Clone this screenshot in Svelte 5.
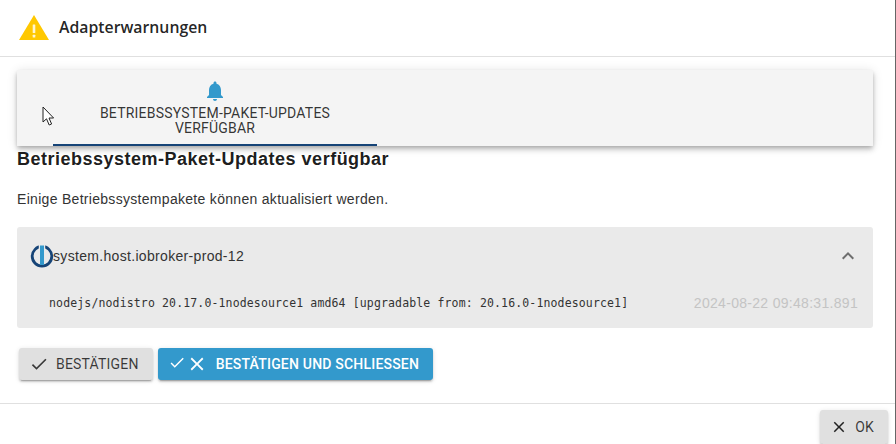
<script>
  const logLine = 'nodejs/nodistro 20.17.0-1nodesource1 amd64 [upgradable from: 20.16.0-1nodesource1]';
</script>

<div class="dialog">
  <header class="title">
    <svg class="warn" viewBox="0 0 30 25" width="30" height="25" aria-hidden="true">
      <path d="M15 0 L30 25 H0 Z" fill="#ffc800"/>
      <rect x="13.7" y="9.5" width="2.6" height="8.5" rx="0.5" fill="#fff5d0"/>
      <rect x="13.7" y="19.8" width="2.6" height="2.6" rx="0.5" fill="#fff5d0"/>
    </svg>
    <h2>Adapterwarnungen</h2>
  </header>

  <main class="content">
    <nav class="tabs">
      <div class="tab">
        <svg viewBox="0 0 24 24" width="24" height="24" aria-hidden="true">
          <path fill="#3399cc" d="M12 22c1.1 0 2-.9 2-2h-4c0 1.1.9 2 2 2zm6-6v-5c0-3.07-1.63-5.64-4.5-6.32V4c0-.83-.67-1.5-1.5-1.5s-1.5.67-1.5 1.5v.68C7.64 5.36 6 7.92 6 11v5l-2 2v1h16v-1l-2-2z"/>
        </svg>
        <span>BETRIEBSSYSTEM-PAKET-UPDATES VERFÜGBAR</span>
      </div>
      <svg class="cursor" viewBox="0 0 14 21" width="14" height="21" aria-hidden="true">
        <path d="M1 1 V16 L4.5 12.8 L7.2 19 L9.6 18 L7 12 H11.6 Z" fill="#fff" stroke="#222" stroke-width="1"/>
      </svg>
    </nav>

    <h3>Betriebssystem-Paket-Updates verfügbar</h3>
    <p class="desc">Einige Betriebssystempakete können aktualisiert werden.</p>

    <section class="panel">
      <div class="panel-head">
        <svg class="logo" viewBox="0 0 24 24" width="24" height="24" aria-hidden="true">
          <circle cx="12" cy="12.3" r="9.8" fill="none" stroke="#164477" stroke-width="2.8"/>
          <rect x="8.8" y="0" width="6.4" height="6" fill="#eaeaea"/>
          <rect x="10" y="1.5" width="4" height="19.5" fill="#3399cc"/>
        </svg>
        <span class="host">system.host.iobroker-prod-12</span>
        <svg class="chev" viewBox="0 0 24 24" width="24" height="24" aria-hidden="true">
          <path fill="#6e6e6e" d="M12 8l-6 6 1.41 1.41L12 10.83l4.59 4.58L18 14z"/>
        </svg>
      </div>
      <div class="panel-body">
        <code>{logLine}</code>
        <time>2024-08-22 09:48:31.891</time>
      </div>
    </section>

    <div class="actions">
      <button class="btn grey">
        <svg class="ic" viewBox="0 0 24 24" width="20" height="20" aria-hidden="true"><path fill="currentColor" d="M9 16.17 4.83 12l-1.42 1.41L9 19 21 7l-1.41-1.41z"/></svg>
        BESTÄTIGEN
      </button>
      <button class="btn blue">
        <svg class="small" viewBox="0 0 24 24" width="18" height="18" aria-hidden="true"><path fill="currentColor" d="M9 16.17 4.83 12l-1.42 1.41L9 19 21 7l-1.41-1.41z"/></svg>
        <svg class="ic" viewBox="0 0 24 24" width="22" height="22" aria-hidden="true"><path fill="currentColor" d="M19 6.41 17.59 5 12 10.59 6.41 5 5 6.41 10.59 12 5 17.59 6.41 19 12 13.41 17.59 19 19 17.59 13.41 12z"/></svg>
        BESTÄTIGEN UND SCHLIESSEN
      </button>
    </div>
  </main>

  <footer class="foot">
    <button class="btn grey ok">
      <svg class="ic" viewBox="0 0 24 24" width="18" height="18" aria-hidden="true"><path fill="#222" d="M19 6.41 17.59 5 12 10.59 6.41 5 5 6.41 10.59 12 5 17.59 6.41 19 12 13.41 17.59 19 19 17.59 13.41 12z"/></svg>
      OK
    </button>
  </footer>
</div>

<style>
  :global(body) {
    margin: 0;
    background: #fff;
  }
  .dialog {
    width: 895px;
    height: 444px;
    border-right: 1px solid #666;
    display: flex;
    flex-direction: column;
    overflow: hidden;
    font-family: Roboto, sans-serif;
    color: rgba(0, 0, 0, 0.87);
  }
  .title {
    height: 57px;
    box-sizing: border-box;
    border-bottom: 1px solid #e0e0e0;
    display: flex;
    align-items: center;
    gap: 10px;
    padding: 0 0 2px 19px;
  }
  .warn { flex: none; }
  h2 {
    margin: 0;
    font-family: "Open Sans", sans-serif;
    font-size: 15.8px;
    font-weight: 600;
    line-height: 20px;
  }
  .content {
    flex: 1;
    padding: 13px 22px 0 17px;
    min-height: 0;
  }
  .tabs {
    position: relative;
    height: 76px;
    background: #f4f4f4;
    box-shadow: 0 2px 4px -1px rgba(0,0,0,.2), 0 4px 5px rgba(0,0,0,.14), 0 1px 10px rgba(0,0,0,.12);
    padding-left: 36px;
  }
  .tab {
    width: 324px;
    height: 76px;
    box-sizing: border-box;
    border-bottom: 2px solid #164477;
    display: flex;
    flex-direction: column;
    align-items: center;
    padding-top: 9px;
    font-size: 14px;
    line-height: 15px;
    letter-spacing: 0.21px;
    text-align: center;
    color: rgba(0,0,0,.8);
  }
  .tab span { width: 250px; margin-top: 3px; }
  .cursor {
    position: absolute;
    left: 25px;
    top: 36px;
  }
  h3 {
    margin: 3px 0 0;
    font-family: "Liberation Sans", sans-serif;
    font-size: 18px;
    font-weight: 700;
    line-height: 20px;
    letter-spacing: 0.5px;
    color: rgba(0,0,0,.9);
  }
  .desc {
    margin: 20px 0 0;
    font-family: "Liberation Sans", sans-serif;
    font-size: 14px;
    line-height: 20px;
    color: #333;
    letter-spacing: 0.3px;
  }
  .panel {
    margin-top: 18px;
    height: 101px;
    background: #eaeaea;
    border-radius: 3px;
    font-family: "Liberation Sans", sans-serif;
  }
  .panel-head {
    height: 58px;
    display: flex;
    align-items: center;
    padding: 0 13px;
    font-size: 14px;
    color: #333;
  }
  .logo { flex: none; margin-right: -1px; }
  .host { flex: 1; letter-spacing: 0.32px; }
  .panel-body {
    display: flex;
    justify-content: space-between;
    align-items: center;
    padding: 0 15px 4px 32px;
    height: 40px;
    box-sizing: border-box;
  }
  code {
    font-family: "DejaVu Sans Mono", monospace;
    font-size: 11.5px;
    letter-spacing: 0.14px;
    color: #333;
  }
  time {
    font-size: 14px;
    letter-spacing: 0.3px;
    color: #c4c4c4;
  }
  .actions {
    display: flex;
    gap: 5px;
    padding: 20px 0 0 2px;
  }
  .btn {
    height: 32px;
    border: 0;
    border-radius: 3px;
    display: inline-flex;
    align-items: center;
    padding: 0 14px 0 10px;
    font-family: Roboto, sans-serif;
    font-size: 14px;
    font-weight: 400;
    letter-spacing: 0.2px;
    cursor: pointer;
    box-shadow: 0 3px 1px -2px rgba(0,0,0,.2), 0 2px 2px rgba(0,0,0,.14), 0 1px 5px rgba(0,0,0,.12);
  }
  .btn .ic { margin-right: 7px; }
  .btn .small { transform: translateY(-1.5px); }
  .blue .ic { margin-right: 8px; }
  .grey { background: #e0e0e0; color: rgba(0,0,0,.75); }
  .blue { background: #3399cc; color: #fff; font-weight: 500; }
  .foot {
    height: 41px;
    box-sizing: border-box;
    border-top: 1px solid #e0e0e0;
    display: flex;
    justify-content: flex-end;
    padding: 6px 7px 0 0;
  }
  .ok { height: 34px; padding: 0 14px 0 10px; }
</style>
